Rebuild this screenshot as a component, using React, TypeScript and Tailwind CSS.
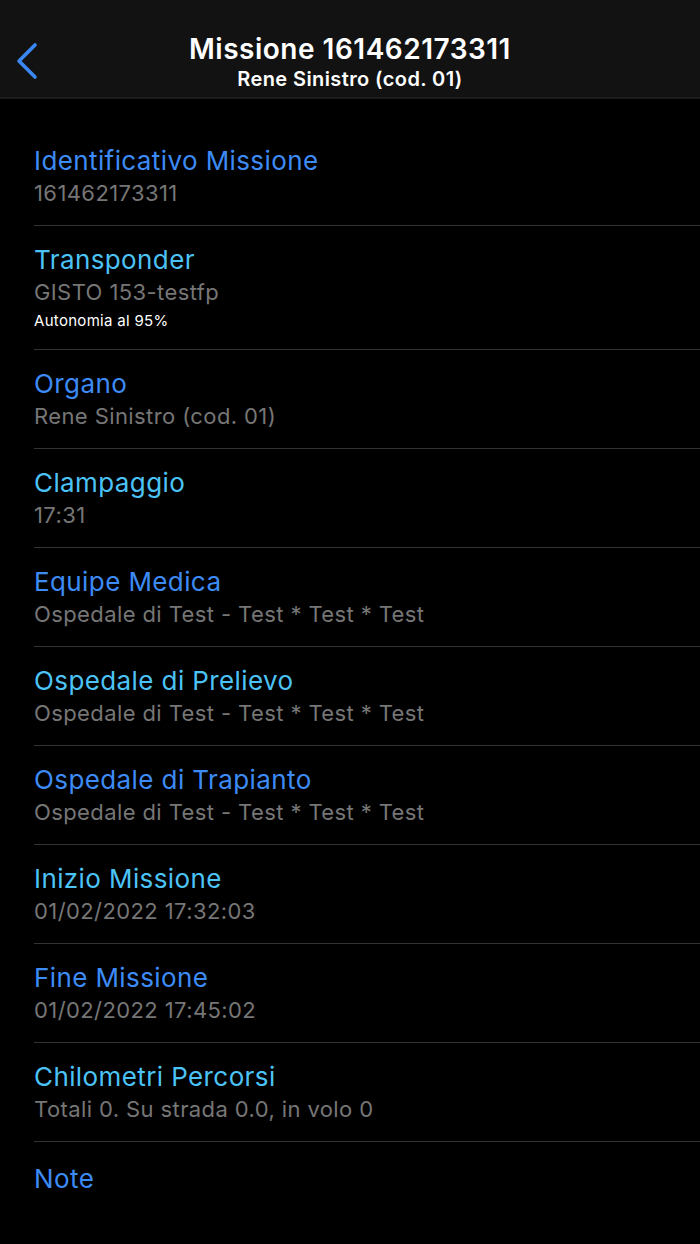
const rows: { title: string; value?: string; extra?: string; cyan?: boolean }[] = [
  { title: "Identificativo Missione", value: "161462173311" },
  { title: "Transponder", value: "GISTO 153-testfp", extra: "Autonomia al 95%", cyan: true },
  { title: "Organo", value: "Rene Sinistro (cod. 01)" },
  { title: "Clampaggio", value: "17:31", cyan: true },
  { title: "Equipe Medica", value: "Ospedale di Test - Test * Test * Test" },
  { title: "Ospedale di Prelievo", value: "Ospedale di Test - Test * Test * Test", cyan: true },
  { title: "Ospedale di Trapianto", value: "Ospedale di Test - Test * Test * Test" },
  { title: "Inizio Missione", value: "01/02/2022 17:32:03", cyan: true },
  { title: "Fine Missione", value: "01/02/2022 17:45:02" },
  { title: "Chilometri Percorsi", value: "Totali 0. Su strada 0.0, in volo 0", cyan: true },
];

const App = () => {
  return (
    <div className="w-[700px] min-h-[1244px] bg-black font-['Inter','Roboto',sans-serif]">
      <header className="relative h-[99px] bg-[#121212] border-b-2 border-[#1c1c1c] flex flex-col items-center">
        <button className="absolute left-[14px] top-[42px] text-[#3b87f5]">
          <svg width="26" height="38" viewBox="0 0 26 38" fill="none">
            <path d="M21 3 L5 19 L21 35" stroke="currentColor" strokeWidth="3.6" strokeLinecap="round" strokeLinejoin="round" />
          </svg>
        </button>
        <h1 className="mt-[31px] text-[28px] leading-[36px] font-semibold text-white tracking-[0.5px]">Missione 161462173311</h1>
        <p className="text-[20px] leading-[24px] font-semibold text-white tracking-[0.4px]">Rene Sinistro (cod. 01)</p>
      </header>

      <div className="pt-[28px] pl-[34px]">
        {rows.map((r) => (
          <div key={r.title} className="pt-[18px] pb-[16px] border-b border-[#333333]">
            <div className={`text-[26px] leading-[32px] tracking-[0.4px] ${r.cyan ? "text-[#4cc3f6]" : "text-[#3d8bf6]"}`}>{r.title}</div>
            <div className="text-[22px] leading-[32px] tracking-[0.4px] text-[#767676]">{r.value}</div>
            {r.extra && <div className="text-[15px] leading-[25px] tracking-[0.3px] text-white">{r.extra}</div>}
          </div>
        ))}
        <div className="pt-[21px] text-[26px] leading-[32px] tracking-[0.4px] text-[#3d8bf6]">Note</div>
      </div>
    </div>
  );
};

export default App;
